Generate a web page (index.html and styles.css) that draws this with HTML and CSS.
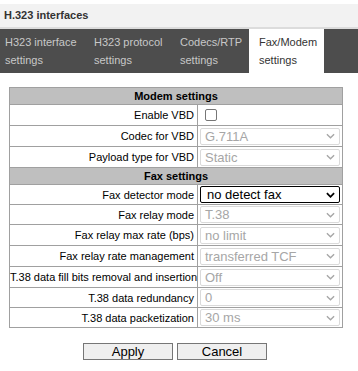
FILE: index.html
```html
<!DOCTYPE html>
<html lang="en">
<head>
    <meta charset="UTF-8">
    <title>H.323 interfaces</title>
    <link rel="stylesheet" href="styles.css">
</head>
<body>
    <div class="page-title">H.323 interfaces</div>

    <!-- Tabs -->
    <div class="tabs">
        <a class="tab t1" href="#">H323 interface settings</a>
        <a class="tab t2" href="#">H323 protocol settings</a>
        <a class="tab t3" href="#">Codecs/RTP settings</a>
        <a class="tab t4 active" href="#">Fax/Modem settings</a>
    </div>

    <table class="settings">
        <colgroup>
            <col class="col-label">
            <col class="col-value">
        </colgroup>
        <tr class="section"><td colspan="2">Modem settings</td></tr>
        <tr class="tall">
            <td class="label">Enable VBD</td>
            <td class="value"><span class="checkbox"></span></td>
        </tr>
        <tr class="tall">
            <td class="label">Codec for VBD</td>
            <td class="value"><div class="select disabled"><span>G.711A</span><svg viewBox="0 0 10 6"><path d="M1 1l4 4 4-4"/></svg></div></td>
        </tr>
        <tr class="tall">
            <td class="label">Payload type for VBD</td>
            <td class="value"><div class="select disabled"><span>Static</span><svg viewBox="0 0 10 6"><path d="M1 1l4 4 4-4"/></svg></div></td>
        </tr>
        <tr class="section"><td colspan="2">Fax settings</td></tr>
        <tr>
            <td class="label">Fax detector mode</td>
            <td class="value"><div class="select"><span>no detect fax</span><svg viewBox="0 0 10 6"><path d="M1 1l4 4 4-4"/></svg></div></td>
        </tr>
        <tr>
            <td class="label">Fax relay mode</td>
            <td class="value"><div class="select disabled"><span>T.38</span><svg viewBox="0 0 10 6"><path d="M1 1l4 4 4-4"/></svg></div></td>
        </tr>
        <tr class="tall">
            <td class="label">Fax relay max rate (bps)</td>
            <td class="value"><div class="select disabled"><span>no limit</span><svg viewBox="0 0 10 6"><path d="M1 1l4 4 4-4"/></svg></div></td>
        </tr>
        <tr class="tall">
            <td class="label">Fax relay rate management</td>
            <td class="value"><div class="select disabled"><span>transferred TCF</span><svg viewBox="0 0 10 6"><path d="M1 1l4 4 4-4"/></svg></div></td>
        </tr>
        <tr class="tall">
            <td class="label">T.38 data fill bits removal and insertion</td>
            <td class="value"><div class="select disabled"><span>Off</span><svg viewBox="0 0 10 6"><path d="M1 1l4 4 4-4"/></svg></div></td>
        </tr>
        <tr>
            <td class="label">T.38 data redundancy</td>
            <td class="value"><div class="select disabled"><span>0</span><svg viewBox="0 0 10 6"><path d="M1 1l4 4 4-4"/></svg></div></td>
        </tr>
        <tr>
            <td class="label">T.38 data packetization</td>
            <td class="value"><div class="select disabled"><span>30 ms</span><svg viewBox="0 0 10 6"><path d="M1 1l4 4 4-4"/></svg></div></td>
        </tr>
    </table>

    <div class="buttons">
        <button class="button">Apply</button>
        <button class="button">Cancel</button>
    </div>
</body>
</html>
```

FILE: styles.css
```css
body {
    margin: 0;
    padding-top: 4px;
    font-family: 'Liberation Sans', Arial, sans-serif;
    font-size: 11px;
    color: #000;
    background: #fff;
}

/* Page header */
.page-title {
    height: 23px;
    line-height: 23px;
    padding-left: 4px;
    background-color: #f2f2f2;
    border-bottom: 2px solid #dcdcdc;
    font-size: 11px;
    font-weight: bold;
    color: #333;
}

/* Tabs */
.tabs {
    display: flex;
    height: 44px;
    background-color: #4d4d4d;
}

.tab {
    box-sizing: border-box;
    padding: 4px 0 0 5px;
    line-height: 18px;
    color: #c8c8c8;
    text-decoration: none;
    font-size: 11px;
}

.t1 { width: 89px; }
.t2 { width: 86px; }
.t3 { width: 74px; }
.t4 { width: 75px; }

.tab.active {
    padding-left: 10px;
    background-color: #fff;
    color: #333;
}

/* Settings table */
.settings {
    margin: 14px 0 0 9px;
    width: 334px;
    table-layout: fixed;
    border-collapse: collapse;
    border: 1px solid #a0a0a0;
}

.col-label {
    width: 188px;
}

.settings td {
    border: 1px solid #a0a0a0;
    padding: 0;
    height: 19px;
    white-space: nowrap;
}

.settings tr.tall td {
    height: 20px;
}

.settings tr.section td {
    height: 16px;
    background-color: #bfbfbf;
    text-align: center;
    font-weight: bold;
}

.settings td.label {
    padding-right: 3px;
    text-align: right;
}

.settings td.value {
    padding-left: 2px;
}

.checkbox {
    display: block;
    box-sizing: border-box;
    width: 12px;
    height: 12px;
    margin-left: 5px;
    border: 1px solid #767676;
    border-radius: 2px;
}

.select {
    box-sizing: border-box;
    display: flex;
    justify-content: space-between;
    align-items: center;
    width: 140px;
    height: 17px;
    padding: 0 4px;
    border: 1px solid #000;
    border-radius: 2px;
    font-size: 13px;
    color: #000;
}

.select span {
    padding-left: 2px;
}

.select svg {
    width: 9px;
    height: 6px;
    fill: none;
    stroke: #000;
    stroke-width: 2;
}

.select.disabled {
    border-color: #dadada;
    color: #a6a6a6;
}

.select.disabled span {
    padding-left: 0;
}

.select.disabled svg {
    stroke: #a6a6a6;
    stroke-width: 1.5;
}

/* Buttons */
.buttons {
    display: flex;
    justify-content: center;
    gap: 4px;
    margin-top: 15px;
    padding-right: 8px;
}

.button {
    box-sizing: border-box;
    width: 90px;
    height: 17px;
    padding: 0;
    font-family: 'Liberation Sans', Arial, sans-serif;
    font-size: 13px;
    color: #000;
    background-color: #efefef;
    border: 1px solid #767676;
    border-radius: 0;
}
```
